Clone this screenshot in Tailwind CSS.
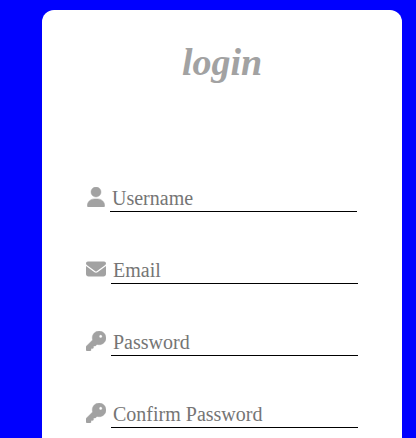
<!DOCTYPE html>
<html lang="en">
<head>
<meta charset="utf-8">
<meta name="viewport" content="width=device-width, initial-scale=1">
<title>login</title>
<script src="https://cdn.jsdelivr.net/npm/@tailwindcss/browser@4"></script>
</head>
<body class="flex min-h-screen bg-[#0000ff] pt-[10px] pr-[14px] pl-[42px] font-['Liberation_Serif','Times_New_Roman',serif]">
<main class="flex-1 rounded-t-xl bg-white pt-[29px]">
  <h1 class="text-center text-[38px] leading-[46px] font-bold italic text-[#a2a2a2]">login</h1>
  <form class="mt-[101px] flex flex-col gap-[46px] px-4">
    <div class="flex items-end justify-center gap-[5px]">
      <label for="username" class="mb-[5px] shrink-0 text-[#a2a2a2]" aria-label="Username">
        <svg class="h-5 w-[18px] fill-current stroke-current stroke-[12]" viewBox="0 0 448 512" aria-hidden="true"><path d="M224 256A128 128 0 1 0 224 0a128 128 0 1 0 0 256zm-45.7 48C79.8 304 0 383.8 0 482.3C0 498.7 13.3 512 29.7 512H418.3c16.4 0 29.7-13.3 29.7-29.7C448 383.8 368.2 304 269.7 304H178.3z"/></svg>
      </label>
      <input id="username" type="text" placeholder="Username" class="h-[26px] w-[247px] min-w-0 border-b border-black px-[2px] pb-[2px] text-[20px] outline-none placeholder:text-[#757575]">
    </div>
    <div class="flex items-end justify-center gap-[5px]">
      <label for="email" class="mb-[5px] shrink-0 text-[#a2a2a2]" aria-label="Email">
        <svg class="size-5 fill-current" viewBox="0 0 512 512" aria-hidden="true"><path d="M48 64C21.5 64 0 85.5 0 112c0 15.1 7.1 29.3 19.2 38.4L236.8 313.6c11.4 8.5 27 8.5 38.4 0L492.8 150.4c12.1-9.1 19.2-23.3 19.2-38.4c0-26.5-21.5-48-48-48H48zM0 176V384c0 35.3 28.7 64 64 64H448c35.3 0 64-28.7 64-64V176L294.4 339.2c-22.8 17.1-54 17.1-76.8 0L0 176z"/></svg>
      </label>
      <input id="email" type="email" placeholder="Email" class="h-[26px] w-[247px] min-w-0 border-b border-black px-[2px] pb-[2px] text-[20px] outline-none placeholder:text-[#757575]">
    </div>
    <div class="flex items-end justify-center gap-[5px]">
      <label for="password" class="mb-[5px] shrink-0 text-[#a2a2a2]" aria-label="Password">
        <svg class="size-5 fill-current stroke-current stroke-[10]" viewBox="0 0 512 512" aria-hidden="true"><path d="M336 352c97.2 0 176-78.8 176-176S433.2 0 336 0S160 78.8 160 176c0 18.7 2.9 36.8 8.3 53.7L7 391c-4.5 4.5-7 10.6-7 17v80c0 13.3 10.7 24 24 24h80c13.3 0 24-10.7 24-24V448h40c13.3 0 24-10.7 24-24V384h40c6.4 0 12.5-2.5 17-7l33.3-33.3c16.9 5.4 35 8.3 53.7 8.3zM376 96a40 40 0 1 1 0 80 40 40 0 1 1 0-80z"/></svg>
      </label>
      <input id="password" type="password" placeholder="Password" class="h-[26px] w-[247px] min-w-0 border-b border-black px-[2px] pb-[2px] text-[20px] outline-none placeholder:text-[#757575]">
    </div>
    <div class="flex items-end justify-center gap-[5px]">
      <label for="confirm" class="mb-[5px] shrink-0 text-[#a2a2a2]" aria-label="Confirm Password">
        <svg class="size-5 fill-current stroke-current stroke-[10]" viewBox="0 0 512 512" aria-hidden="true"><path d="M336 352c97.2 0 176-78.8 176-176S433.2 0 336 0S160 78.8 160 176c0 18.7 2.9 36.8 8.3 53.7L7 391c-4.5 4.5-7 10.6-7 17v80c0 13.3 10.7 24 24 24h80c13.3 0 24-10.7 24-24V448h40c13.3 0 24-10.7 24-24V384h40c6.4 0 12.5-2.5 17-7l33.3-33.3c16.9 5.4 35 8.3 53.7 8.3zM376 96a40 40 0 1 1 0 80 40 40 0 1 1 0-80z"/></svg>
      </label>
      <input id="confirm" type="password" placeholder="Confirm Password" class="h-[26px] w-[247px] min-w-0 border-b border-black px-[2px] pb-[2px] text-[20px] outline-none placeholder:text-[#757575]">
    </div>
  </form>
</main>
</body>
</html>
